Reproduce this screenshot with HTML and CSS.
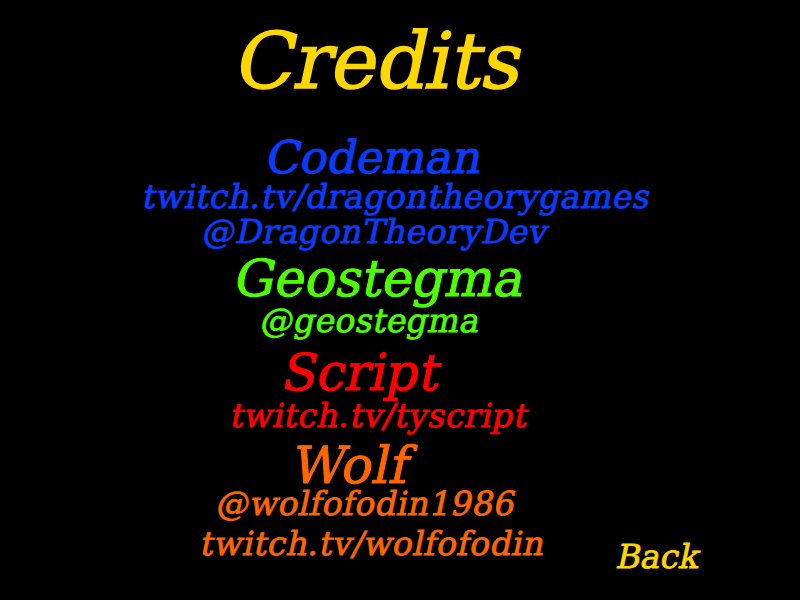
FILE: index.html
```html
<!DOCTYPE html>
<html>
<head>
<meta charset="utf-8">
<link rel="stylesheet" href="styles.css">
</head>
<body>
<main class="screen">
  <div class="line title">Credits</div>
  <div class="line name blue l-codeman">Codeman</div>
  <div class="line sub blue l-twitch1">twitch.tv/dragontheorygames</div>
  <div class="line sub blue l-dragon">@DragonTheoryDev</div>
  <div class="line name green l-geo">Geostegma</div>
  <div class="line sub green l-geo2">@geostegma</div>
  <div class="line name red l-script">Script</div>
  <div class="line sub red l-ty">twitch.tv/tyscript</div>
  <div class="line name orange l-wolf">Wolf</div>
  <div class="line sub orange l-wolf2">@wolfofodin1986</div>
  <div class="last-row">
    <div class="line sub orange l-wolf3">twitch.tv/wolfofodin</div>
    <div class="line sub back">Back</div>
  </div>
</main>
</body>
</html>
```
FILE: styles.css
```css
html, body {
  margin: 0;
  padding: 0;
  background: #000;
}
.screen {
  width: 800px;
  height: 600px;
  overflow: hidden;
  display: flex;
  flex-direction: column;
  align-items: flex-start;
  font-family: "DejaVu Serif", serif;
  font-style: normal;
}
.line {
  line-height: 1;
  white-space: nowrap;
  transform: skewX(-12deg);
  transform-origin: 0 85%;
  -webkit-text-stroke: 0.8px currentColor;
}
.title { font-size: 78px; color: #ffd700; margin: 22px 0 0 232px; letter-spacing: -0.5px; -webkit-text-stroke: 1.4px currentColor; }
.name { font-size: 51px; -webkit-text-stroke: 1px currentColor; }
.sub { font-size: 33px; letter-spacing: 0.4px; }
.blue { color: #0a3cff; }
.green { color: #4cff00; }
.red { color: #ff0000; }
.orange { color: #ff6600; }
.l-codeman { font-size: 45px; margin: 35px 0 0 264px; }
.l-twitch1 { margin: 0 0 0 141px; letter-spacing: 0.5px; }
.l-dragon { margin: 2px 0 0 201px; }
.l-geo { margin: 5px 0 0 232px; }
.l-geo2 { margin: 0 0 0 259px; }
.l-script { margin: 10px 0 0 280px; }
.l-ty { margin: 1px 0 0 229px; letter-spacing: 0.6px; }
.l-wolf { margin: 8px 0 0 290px; letter-spacing: 0.5px; }
.l-wolf2 { margin: -4px 0 0 215px; }
.last-row {
  display: flex;
  align-items: flex-start;
  margin-top: 7px;
  width: 800px;
}
.l-wolf3 { margin-left: 199px; letter-spacing: 0.5px; }
.back { color: #ffd700; margin: 13px 103px 0 auto; letter-spacing: 0; }
```
